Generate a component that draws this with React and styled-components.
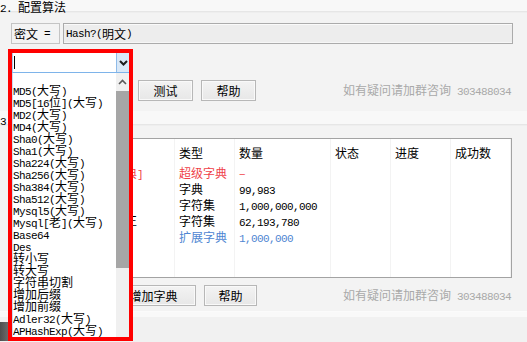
import React from "react";
import styled, { createGlobalStyle } from "styled-components";

const CJK = `"Noto Sans CJK SC", "Noto Sans", sans-serif`;

const Global = createGlobalStyle`
  html, body { margin: 0; padding: 0; background: #f3f3f3; }
  body { font-family: ${CJK}; font-size: 12px; color: #000; }
  * { box-sizing: border-box; }
`;

const Latin = styled.span`
  font-family: "Liberation Mono", monospace;
  font-size: 11px;
  letter-spacing: -0.6px;
  white-space: pre;
`;

const Mix = ({ text }) =>
  text
    .split(/([\x00-\x7F]+)/)
    .filter(Boolean)
    .map((p, i) =>
      /^[\x00-\x7F]+$/.test(p) ? (
        <Latin key={i}>{p}</Latin>
      ) : (
        <React.Fragment key={i}>{p}</React.Fragment>
      )
    );

const Page = styled.div`
  width: 527px;
  height: 342px;
  overflow: hidden;
  background: #f3f3f3;
  display: flex;
  flex-direction: column;
`;

const Section = styled.section`
  display: flex;
  flex-direction: column;
  padding: 0 14px ${(p) => p.$pb}px 11px;
`;

const Head = styled.div`
  height: ${(p) => p.$h}px;
  margin: 0 -14px 0 -11px;
  display: flex;
  align-items: flex-end;
  background: #f8f8f8;
  border-bottom: 1px solid #e6e6e6;
  box-shadow: 0 1px 1px rgba(0, 0, 0, 0.02);
`;

const Title = styled.div`
  line-height: 14px;
  margin-bottom: ${(p) => -p.$drop}px;
  white-space: nowrap;
`;

const FormulaRow = styled.div`
  margin-top: 11px;
  height: 21px;
  display: flex;
  gap: 3px;
`;

const LabelBox = styled.div`
  width: 49px;
  border: 1px solid #c4c4c4;
  padding-left: 2px;
  display: flex;
  align-items: center;
  white-space: nowrap;
`;

const ReadBox = styled.div`
  flex: 1;
  border: 1px solid #ababab;
  background: #ededed;
  box-shadow: inset 0 1px 0 #fafafa, inset 0 -1px 0 #f6f6f6;
  padding-left: 2px;
  display: flex;
  align-items: center;
  white-space: nowrap;
`;

const ComboRow = styled.div`
  margin-top: 9px;
  height: 20px;
  padding-left: 1px;
  display: flex;
`;

const ComboAnchor = styled.div`
  position: relative;
  width: 117px;
  height: 20px;
`;

const Callout = styled.div`
  position: absolute;
  top: -4px;
  left: -4px;
  width: 125px;
  height: 292px;
  border: 4px solid #ff0000;
  background: #fff;
  z-index: 10;
  display: flex;
  flex-direction: column;
`;

const Combo = styled.div`
  height: 20px;
  display: flex;
  background: #fff;
  border-bottom: 1px solid #7eb4ea;
  border-left: 1px solid #a9c9ec;
`;

const Field = styled.div`
  flex: 1;
  display: flex;
  align-items: center;
  padding-left: 1px;
`;

const Caret = styled.span`
  width: 1px;
  height: 13px;
  background: #000;
`;

const DropBtn = styled.div`
  width: 13px;
  background: #d9e8f7;
  border-left: 1px solid #8fbbe8;
  display: flex;
  align-items: center;
  justify-content: center;
`;

const List = styled.div`
  flex: 1;
  display: flex;
  min-height: 0;
  border-left: 1px solid #c9dcf0;
`;

const Items = styled.div`
  flex: 1;
  padding-top: 11px;
  overflow: hidden;
`;

const Item = styled.div`
  height: 12px;
  line-height: 12px;
  white-space: nowrap;
`;

const Scroll = styled.div`
  width: 13px;
  background: #f0f0f0;
  display: flex;
  flex-direction: column;
`;

const ArrowCell = styled.div`
  height: 18px;
  display: flex;
  align-items: center;
  justify-content: center;
`;

const Thumb = styled.div`
  height: 177px;
  background: #a6a6a6;
`;

const ButtonRow = styled.div`
  margin-top: 7px;
  height: 21px;
  display: flex;
  align-items: center;
  gap: 8px;
  padding-left: 1px;
`;

const Button = styled.div`
  width: ${(p) => p.$w}px;
  height: 21px;
  border: 1px solid #b7b7b7;
  background: linear-gradient(#f3f3f3, #e7e7e7);
  box-shadow: inset 0 0 0 1px #f9f9f9;
  display: flex;
  align-items: center;
  justify-content: center;
  white-space: nowrap;
`;

const Hint = styled.div`
  margin-left: auto;
  margin-right: 2px;
  color: #a9a9a9;
  white-space: nowrap;
  line-height: 14px;
`;

const Table = styled.div`
  margin-top: 13px;
  margin-left: 1px;
  margin-right: 1px;
  height: 140px;
  border: 1px solid #a3a3a3;
  background: #fff;
  display: flex;
`;

const Col = styled.div`
  width: ${(p) => (p.$w ? `${p.$w}px` : "auto")};
  flex: ${(p) => (p.$w ? "none" : 1)};
  border-right: 1px solid #f3f3f3;
  display: flex;
  flex-direction: column;
`;

const HeadCell = styled.div`
  height: 26px;
  padding-left: ${(p) => p.$pl}px;
  display: flex;
  align-items: center;
  white-space: nowrap;
`;

const toneColor = { red: "#ef3f49", blue: "#4f86d2" };

const Cell = styled.div`
  height: 16px;
  line-height: 16px;
  padding-left: ${(p) => p.$pl}px;
  white-space: nowrap;
  overflow: hidden;
  color: ${(p) => toneColor[p.$tone] || "#000"};
`;

const Footer = styled.div`
  flex: 1;
  border-top: 1px solid #fbfbfb;
  background: linear-gradient(#f9f9f9 0, #f9f9f9 5px, #f1f1f1 5px);
  display: flex;
  align-items: flex-start;
`;

const DarkEdge = styled.div`
  width: 8px;
  height: 19px;
  margin-top: 10px;
  background: linear-gradient(90deg, #4e4e4e, #6a6a6a);
`;

const ITEMS = [
  "MD5(大写)",
  "MD5[16位](大写)",
  "MD2(大写)",
  "MD4(大写)",
  "Sha0(大写)",
  "Sha1(大写)",
  "Sha224(大写)",
  "Sha256(大写)",
  "Sha384(大写)",
  "Sha512(大写)",
  "Mysql5(大写)",
  "Mysql[老](大写)",
  "Base64",
  "Des",
  "转小写",
  "转大写",
  "字符串切割",
  "增加后缀",
  "增加前缀",
  "Adler32(大写)",
  "APHashExp(大写)",
];

const ROWS = [
  { name: "超级字典[含常用字典]", type: "超级字典", qty: "–", tone: "red" },
  { name: "常用密码字典", type: "字典", qty: "99,983" },
  { name: "9位纯数字", type: "字符集", qty: "1,000,000,000" },
  { name: "手机号+生日格式修正", type: "字符集", qty: "62,193,780" },
  { name: "扩展字典", type: "扩展字典", qty: "1,000,000", tone: "blue" },
];

const COLS = [
  { key: "name", title: "字典名称", w: 162, pl: 10 },
  { key: "type", title: "类型", w: 60, pl: 4 },
  { key: "qty", title: "数量", w: 96, pl: 4 },
  { key: "state", title: "状态", w: 60, pl: 4 },
  { key: "prog", title: "进度", w: 60, pl: 4 },
  { key: "ok", title: "成功数", w: 0, pl: 4 },
];

const Chevron = ({ up, color, width }) => (
  <svg width="9" height="6" viewBox="0 0 9 6">
    <polyline
      points={up ? "1,5 4.5,1.5 8,5" : "1,1 4.5,4.5 8,1"}
      fill="none"
      stroke={color}
      strokeWidth={width}
    />
  </svg>
);

export default function App() {
  return (
    <Page>
      <Global />
      <Section $pb={10}>
        <Head $h={12}>
          <Title $drop={5}>
            <Mix text="2. 配置算法" />
          </Title>
        </Head>
        <FormulaRow>
          <LabelBox>
            <Mix text="密文 =" />
          </LabelBox>
          <ReadBox>
            <Mix text="Hash?(明文)" />
          </ReadBox>
        </FormulaRow>
        <ComboRow>
          <ComboAnchor>
            <Callout>
              <Combo>
                <Field>
                  <Caret />
                </Field>
                <DropBtn>
                  <Chevron color="#1e1e1e" width={2} />
                </DropBtn>
              </Combo>
              <List>
                <Items>
                  {ITEMS.map((t) => (
                    <Item key={t}>
                      <Mix text={t} />
                    </Item>
                  ))}
                </Items>
                <Scroll>
                  <ArrowCell>
                    <Chevron up color="#5a5a5a" width={1.6} />
                  </ArrowCell>
                  <Thumb />
                </Scroll>
              </List>
            </Callout>
          </ComboAnchor>
        </ComboRow>
        <ButtonRow>
          <Button $w={118}>添加</Button>
          <Button $w={55}>测试</Button>
          <Button $w={55}>帮助</Button>
          <Hint>
            <Mix text="如有疑问请加群咨询 303488034" />
          </Hint>
        </ButtonRow>
      </Section>

      <Section $pb={5}>
        <Head $h={14}>
          <Title $drop={5}>
            <Mix text="3. 配置字典" />
          </Title>
        </Head>
        <Table>
          {COLS.map((c) => (
            <Col key={c.key} $w={c.w}>
              <HeadCell $pl={c.pl}>{c.title}</HeadCell>
              {ROWS.map((r, i) => (
                <Cell key={i} $pl={c.pl} $tone={r.tone}>
                  {r[c.key] ? <Mix text={r[c.key]} /> : null}
                </Cell>
              ))}
            </Col>
          ))}
        </Table>
        <ButtonRow>
          <Button $w={91}>选择字典</Button>
          <Button $w={85}>增加字典</Button>
          <Button $w={53}>帮助</Button>
          <Hint>
            <Mix text="如有疑问请加群咨询 303488034" />
          </Hint>
        </ButtonRow>
      </Section>

      <Footer>
        <DarkEdge />
      </Footer>
    </Page>
  );
}
